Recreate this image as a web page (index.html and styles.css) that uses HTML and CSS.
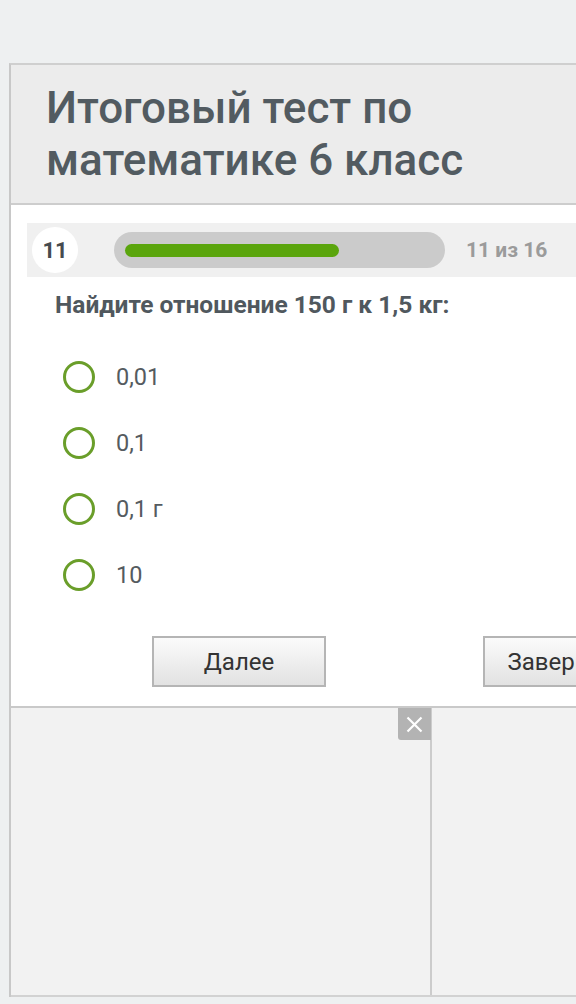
FILE: index.html
```html
<!DOCTYPE html>
<html lang="ru">
<head>
  <meta charset="UTF-8">
  <meta name="viewport" content="width=device-width, initial-scale=1.0">
  <title>Итоговый тест по математике 6 класс</title>
  <link rel="stylesheet" href="styles.css">
</head>
<body>
  <div class="page">
    <div class="quiz">
      <!-- заголовок теста -->
      <div class="quiz-head">
        <h1>Итоговый тест по математике 6 класс</h1>
      </div>

      <div class="quiz-body">
        <!-- прогресс -->
        <div class="progress-row">
          <div class="q-num">11</div>
          <div class="track"><div class="fill"></div></div>
          <div class="count">11 из 16</div>
        </div>

        <div class="question">Найдите отношение 150 г к 1,5 кг:</div>

        <ul class="answers">
          <li><span class="radio"></span>0,01</li>
          <li><span class="radio"></span>0,1</li>
          <li><span class="radio"></span>0,1 г</li>
          <li><span class="radio"></span>10</li>
        </ul>

        <div class="btn-container">
          <a href="#" class="btn btn-next">Далее</a>
          <a href="#" class="btn btn-finish">Завершить</a>
        </div>
      </div>

      <!-- рекламный блок -->
      <div class="ad-row">
        <div class="ad">
          <span class="ad-close">
            <svg width="17" height="17" viewBox="0 0 17 17">
              <path d="M1.5 1.5L15.5 15.5M15.5 1.5L1.5 15.5" stroke="#fff" stroke-width="2.2" fill="none"/>
            </svg>
          </span>
        </div>
      </div>
    </div>
  </div>
</body>
</html>
```

FILE: styles.css
```css
body {
    margin: 0;
    background-color: #eef0f1;
    font-family: Roboto, "Liberation Sans", Arial, sans-serif;
}

.page {
    width: 576px;
    height: 1004px;
    overflow: hidden;
    padding: 63px 0 0 9px;
    box-sizing: border-box;
}

.quiz {
    width: 700px;
    border-top: 2px solid #cfcfcf;
    border-left: 2px solid #c8c8c8;
    background: #f2f2f2;
}

/* заголовок */
.quiz-head {
    background-color: #ececec;
    padding: 17px 0 17px 35px;
    border-bottom: 2px solid #cdcdcd;
}

.quiz-head h1 {
    margin: 0;
    width: 470px;
    font-size: 44px;
    line-height: 52px;
    font-weight: 500;
    color: #525b61;
}

.quiz-body {
    background: #fff;
    padding: 18px 0 19px;
    border-bottom: 2px solid #c9c9c9;
}

/* прогресс */
.progress-row {
    display: flex;
    align-items: center;
    height: 54px;
    margin-left: 16px;
    padding-left: 5px;
    background: #f0f0f0;
}

.q-num {
    width: 46px;
    height: 46px;
    border-radius: 50%;
    background: #fff;
    display: flex;
    align-items: center;
    justify-content: center;
    font-size: 22px;
    font-weight: 700;
    color: #464b4f;
}

.track {
    width: 331px;
    height: 36px;
    margin-left: 36px;
    border-radius: 18px;
    background: #cbcbcb;
    display: flex;
    align-items: center;
}

.fill {
    width: 214px;
    height: 13px;
    margin-left: 11px;
    border-radius: 7px;
    background: #5aa50c;
}

.count {
    margin-left: 21px;
    font-size: 21px;
    font-weight: 700;
    color: #9b9b9b;
}

.question {
    margin: 16px 0 0 44px;
    font-size: 24.5px;
    line-height: 24px;
    font-weight: 700;
    color: #50585e;
}

.answers {
    list-style: none;
    margin: 27px 0 0;
    padding: 0 0 0 52px;
}

.answers li {
    display: flex;
    align-items: center;
    height: 66px;
    font-size: 23.5px;
    color: #555b60;
}

.radio {
    width: 32px;
    height: 32px;
    box-sizing: border-box;
    border: 3px solid #6a9e2a;
    border-radius: 50%;
    margin-right: 21px;
}

.btn-container {
    display: flex;
    gap: 157px;
    margin: 28px 0 0 141px;
}

.btn {
    width: 174px;
    height: 51px;
    box-sizing: border-box;
    display: flex;
    align-items: center;
    justify-content: center;
    border: 2px solid #b5b5b5;
    background: linear-gradient(#fbfbfb, #e2e2e2);
    color: #333;
    font-size: 24px;
    text-decoration: none;
    white-space: nowrap;
}

/* реклама */
.ad-row {
    height: 287px;
    border-bottom: 2px solid #d2d2d2;
}

.ad {
    position: relative;
    width: 419px;
    height: 100%;
    border-right: 2px solid #cccccc;
}

.ad-close {
    position: absolute;
    top: 0;
    right: -1px;
    width: 33px;
    height: 32px;
    background: #b3b3b3;
    border-radius: 0 0 0 3px;
    display: flex;
    align-items: center;
    justify-content: center;
}
```
